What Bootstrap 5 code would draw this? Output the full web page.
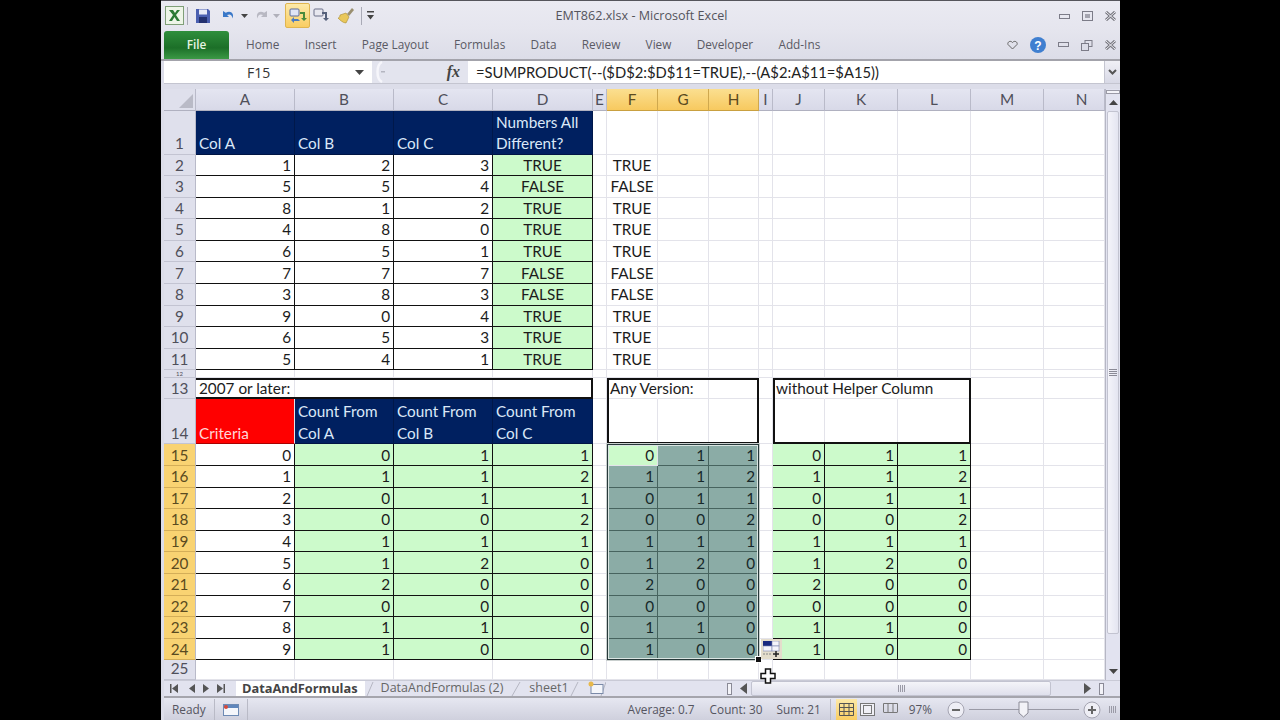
<!DOCTYPE html>
<html lang="en">
<head>
    <meta charset="UTF-8">
    <meta name="viewport" content="width=device-width, initial-scale=1.0">
    <title>EMT862.xlsx - Microsoft Excel</title>
    <link href="https://cdn.jsdelivr.net/npm/bootstrap@5.3.2/dist/css/bootstrap.min.css" rel="stylesheet">
    <style>
        html, body { height: 100%; background: #000; overflow: hidden; }
        .xl-window { width: 959px; height: 720px; margin-left: 161px; background: #dcdde9; border-top: 1px solid #55555c; font-family: "Open Sans", "Liberation Sans", sans-serif; font-size: 11.8px; color: #5a5a64; }

        .xl-titlebar { height: 29px; display: grid; grid-template-columns: 1fr auto 1fr; align-items: center; background: linear-gradient(#eaeaf2, #e5e5ee); padding-left: 3px; }
        .xl-qat svg { display: block; }
        .xl-qat-on { width: 25px; height: 25px; background: linear-gradient(#fde9a8, #f9cd62); border: 1px solid #e0b550; border-radius: 2px; }
        .xl-qsep { width: 1px; height: 18px; background: #a9aab6; }
        .q1 { margin-left: 1px; } .q3 { margin-left: 3px; } .q4 { margin-left: 4px; } .q5 { margin-left: 5px; }
        .q6 { margin-left: 6px; } .q7 { margin-left: 7px; } .q9 { margin-left: 9px; } .q10 { margin-left: 10px; }
        .q14 { margin-left: 14px; } .q15 { margin-left: 15px; }
        .xl-doctitle { font-size: 12.6px; color: #54545c; padding: 1px 1px 0 0; }
        .xl-winbtns { gap: 12px; padding-right: 4px; }

        .xl-tabs { height: 31px; background: linear-gradient(#e5e5ee, #dcdde8); padding: 1px 0 0 3px; border-bottom: 2px solid #a3a3ab; }
        .xl-file { width: 65px; height: 28px; background: linear-gradient(#2f8f3c, #1c6f28 60%, #3b9945); color: #e6f4e2; border-radius: 3px 3px 0 0; font-weight: 600; }
        .xl-tablist { gap: 25.300px; margin-left: 17px; }

        .xl-formula { height: 23px; background: #e3e4ee; margin-left: 3px; border-bottom: 1px solid #c4c5d0; }
        .xl-namebox { width: 208px; background: #fff; color: #333; font-size: 14px; }
        .xl-namebox span { margin-left: 83px; }
        .xl-fxzone { width: 96px; }
        .xl-fx { font-family: "Liberation Serif", serif; font-style: italic; font-weight: 700; font-size: 16px; color: #444; margin-right: 8px; }
        .xl-formula-text { background: #fff; font-family: Lato, "Liberation Sans", sans-serif; font-size: 14.750px; color: #222; padding-left: 8px; }
        .xl-formula-btn { width: 16px; background: linear-gradient(#f0f0f6, #d8d9e6); border-left: 1px solid #c4c5d0; }
        .xl-gap { height: 5px; }

        .xl-sheetwrap { margin-left: 3px; }
        .xl-sheet { width: 941px; height: 591px; display: grid; overflow: hidden; background: #fff;
            grid-template-columns: 32px 99px 99px 99px 100px 14px 51px 51px 50px 14px 52px 73px 73px 73px 61px;
            grid-template-rows: 22px 43.5px repeat(10, 21.6px) 7.5px 21.5px 45px repeat(10, 21.6px) 19.5px;
            font-family: Lato, "Liberation Sans", sans-serif; font-size: 15.300px; color: #1c1c1c; }
        .xl-cell { border-right: 1px solid #e3e3ea; border-bottom: 1px solid #e3e3ea; padding: 0 3px; white-space: nowrap; overflow: visible; display: flex; align-items: flex-end; line-height: 21.5px; min-width: 0; min-height: 0; }
        .xl-cell > span { margin-bottom: -1px; }
        .xl-num { justify-content: flex-end; padding-right: 3px; }
        .xl-mid { justify-content: center; }
        .xl-flowover { border-right-color: transparent; }
        .xl-hd { background: linear-gradient(#e4e5f1, #d8d9e8); border-right: 1px solid #b9bac9; border-bottom: 1px solid #b0b1c0; color: #4f4f5a; justify-content: center; align-items: center; overflow: hidden; }
        .xl-hd > span { margin-bottom: 0; }
        .xl-hd-clip { padding-left: 15px; padding-right: 0; }
        .xl-rh { background: #dfe0ec; border-right: 1px solid #b9bac9; border-bottom: 1px solid #c3c4d2; color: #4f4f5a; justify-content: center; padding: 0; overflow: hidden; }
        .xl-rh-thin { font-size: 6px; line-height: 7px; align-items: center; }
        .xl-rh-thin > span { margin-bottom: 0; }
        .xl-hd-on { background: linear-gradient(#fbdf90, #f7c95f); border-right-color: #cfa84e; border-bottom-color: #c9a040; color: #5a4a20; }
        .xl-rh-on { background: #f9d372; border-bottom-color: #d4ae58; color: #5a4a20; }
        .xl-corner { background: #dfe0ec; justify-content: flex-end; align-items: flex-end; padding: 0 2px 2px 0; }
        .xl-boxed { border-right-color: #111; border-bottom-color: #111; }
        .xl-navy { background: #002060; color: #dbe8f8; border-right-color: #00184a; border-bottom-color: #001544; white-space: normal; }
        .xl-red { background: #f00; color: #ffd8d8; border-bottom-color: #a00; }
        .xl-green { background: #ccfacb; }
        .xl-sel { background: #8bacA6; color: #17282a; border-right-color: #47645f; border-bottom-color: #47645f; }
        .xl-frame { border: 2px solid #111; pointer-events: none; }
        .xl-frame-open { border-left-width: 0; }
        .xl-selbox { border: 1px solid #27393a; box-shadow: inset 0 0 0 1px #dbe6e3, 0 0 0 1px #c9cfce; pointer-events: none; }

        .xl-bottom { height: 18px; margin-left: 3px; background: #e2e3ef; border-top: 1px solid #c9cad6; border-bottom: 2px solid #a5a5ad; }
        .xl-sheetnav { width: 72px; gap: 8px; padding-left: 6px; color: #555; }
        .xl-sheettab { height: 15px; font-size: 12.500px; color: #666; }
        .xl-sheettab-on { background: #fff; font-size: 12.800px; font-weight: 700; color: #444; padding: 0 7px 0 6px; }
        .xl-slant { display: block; }
        .xl-split { width: 5px; height: 12px; border: 1px solid #8a8a96; background: #f3f3f8; }
        .xl-hthumb { width: 300px; height: 15px; background: linear-gradient(#f4f4f9, #dfe0ec); border: 1px solid #c2c3d0; border-radius: 2px; }
        .xl-harrow { margin-left: 33px; }
        .xl-grip { width: 7px; height: 7px; background: repeating-linear-gradient(90deg, #9a9aa6 0 1px, transparent 1px 2px); }

        .xl-vscroll { width: 15px; height: 591px; background: #e2e3f0; border-left: 1px solid #b6b7c4; }
        .xl-vsplit { height: 4px; background: #f4f4f9; border: 1px solid #9a9aa6; margin-top: 1px; }
        .xl-varrow { height: 17px; }
        .xl-vthumb { height: 523px; background: linear-gradient(90deg, #f4f4fa, #e4e5f1); border: 1px solid #c2c3d0; border-radius: 2px; margin: 0 1px; }
        .xl-vgrip { width: 8px; height: 7px; background: repeating-linear-gradient(#8a8a96 0 1px, transparent 1px 2px); }

        .xl-status { height: 22px; margin-left: 3px; background: linear-gradient(#e6e7f1, #cfd0dd); color: #55555f; padding-top: 1px; }
        .xl-status-div { width: 1px; height: 21px; background: #b9bac6; }
        .xl-view { width: 21px; height: 21px; }
        .xl-view-on { background: linear-gradient(#fde9a8, #f9cd62); }
        .xl-viewgap { margin-left: 2px; }
        .xl-pct { margin: 0 15px 0 8px; }
        .xl-zoomtrack { width: 110px; height: 1px; background: #9a9aa6; position: relative; margin: 0 4px; }
        .xl-zoomthumb { position: absolute; left: 49px; top: -8px; }

        .xl-hover { position: absolute; z-index: 5; }
        .xl-handle { left: 755px; top: 656px; }
        .xl-fillopts { left: 761px; top: 639px; width: 21px; height: 20px; background: #e4ddcc; }
        .xl-cursor { left: 760px; top: 668px; }
    </style>
</head>
<body>
<div class="xl-window position-relative">
    <div class="xl-titlebar">
        <div class="xl-qat d-flex align-items-center">
            <svg class="q1" width="19" height="19" viewBox="0 0 19 19"><rect x=".5" y=".5" width="18" height="18" fill="#eef5e8" stroke="#7f9f78"/><path d="M4 4l4 5-4 6h3l2.500-4 2.500 4h3l-4-6 4-5h-3l-2 3-2-3z" fill="#2c7a35"/></svg>
            <span class="xl-qsep q3"></span>
            <svg class="q7" width="16" height="16" viewBox="0 0 16 16"><path d="M1 1h12l2 2v12H1z" fill="#4b5fb0"/><rect x="4" y="1.500" width="8" height="5" fill="#e8eaf6"/><rect x="4" y="9" width="8" height="6" fill="#23306e"/></svg>
            <svg class="q10" width="14" height="14" viewBox="0 0 14 14"><path d="M2 2v6h6L6 6c3-1.500 5 0 5.500 3.500C13.500 5 10 1 4.800 3.800z" fill="#3a78c8"/></svg>
            <svg class="q6" width="7" height="4" viewBox="0 0 7 4"><path d="M0 0h7L3.500 4z" fill="#444"/></svg>
            <svg class="q7" width="14" height="14" viewBox="0 0 14 14"><path d="M12 2v6H6l2-2C5 4.500 3 6 2.500 9.500.5 5 4 1 9.200 3.800z" fill="#b8b8c2"/></svg>
            <svg class="q4" width="7" height="4" viewBox="0 0 7 4"><path d="M0 0h7L3.500 4z" fill="#b0b0ba"/></svg>
            <span class="xl-qat-on q5 d-flex align-items-center justify-content-center">
                <svg width="18" height="18" viewBox="0 0 18 18"><rect x="1" y="2" width="9" height="7" rx="1" fill="#dfe4f4" stroke="#5b6b9a"/><path d="M9 12l-4 0 0-2-3 3 3 3 0-2 6 0z" fill="#4a7ac0"/><path d="M11 5h5v6l2 0-3 3-3-3 2 0V7h-3z" fill="#4a8a3c"/></svg>
            </span>
            <svg class="q3" width="18" height="17" viewBox="0 0 18 17"><rect x="1" y="2" width="9" height="7" rx="1" fill="#e8e8f0" stroke="#6b6f88"/><path d="M9 5h5v6l2 0-3 3-3-3 2 0V7H9z" fill="#55607a"/></svg>
            <svg class="q6" width="18" height="17" viewBox="0 0 18 17"><path d="M10 7l5-6 2 2-5 6z" fill="#9a8f70"/><path d="M3 8l6-2 3 4-3 6c-3 0-6-3-8-5 1 0 2-1 2-3z" fill="#e9c75a" stroke="#a88c30" stroke-width=".6"/></svg>
            <span class="xl-qsep q6"></span>
            <svg class="q5" width="7" height="9" viewBox="0 0 7 9"><path d="M0 0h7v1.500H0zM0 4h7L3.500 8.500z" fill="#444"/></svg>
        </div>
        <div class="xl-doctitle">EMT862.xlsx - Microsoft Excel</div>
        <div class="xl-winbtns d-flex justify-content-end align-items-center">
            <svg width="11" height="10" viewBox="0 0 11 10"><rect x=".5" y="3.500" width="10" height="4" fill="none" stroke="#7c7c88"/></svg>
            <svg width="11" height="10" viewBox="0 0 11 10"><rect x=".5" y=".5" width="10" height="9" fill="none" stroke="#7c7c88"/><rect x="3" y="3" width="5" height="4" fill="#a5a5b0"/></svg>
            <svg width="11" height="10" viewBox="0 0 11 10"><path d="M1 1l9 8M10 1L1 9" stroke="#77777f" stroke-width="3"/><path d="M1 1l9 8M10 1L1 9" stroke="#eeeef4"/></svg>
        </div>
    </div>

    <div class="xl-tabs d-flex align-items-center">
        <div class="xl-file d-flex align-items-center justify-content-center">File</div>
        <div class="xl-tablist d-flex flex-grow-1">
            <span>Home</span><span>Insert</span><span>Page Layout</span><span>Formulas</span><span>Data</span><span>Review</span><span>View</span><span>Developer</span><span>Add-Ins</span>
        </div>
        <div class="xl-winbtns d-flex align-items-center">
            <svg width="11" height="10" viewBox="0 0 11 10"><path d="M5.500 9L1 4.500C0 2 3.500 0 5.500 2.500 7.500 0 11 2 10 4.500z" fill="none" stroke="#666"/></svg>
            <svg width="16" height="16" viewBox="0 0 16 16"><circle cx="8" cy="8" r="8" fill="#3f7fd0"/><text x="8" y="12.500" text-anchor="middle" font-size="12" font-weight="700" fill="#fff" font-family="Liberation Sans">?</text></svg>
            <svg width="11" height="6" viewBox="0 0 11 6"><rect x=".5" y=".5" width="10" height="4" fill="none" stroke="#7c7c88"/></svg>
            <svg width="12" height="11" viewBox="0 0 12 11"><rect x="4" y=".5" width="7" height="6" fill="none" stroke="#7c7c88"/><rect x=".5" y="3.500" width="7" height="7" fill="#dcdde8" stroke="#7c7c88"/></svg>
            <svg width="11" height="10" viewBox="0 0 11 10"><path d="M1 1l9 8M10 1L1 9" stroke="#77777f" stroke-width="3"/><path d="M1 1l9 8M10 1L1 9" stroke="#eeeef4"/></svg>
        </div>
    </div>

    <div class="xl-formula d-flex">
        <div class="xl-namebox d-flex align-items-center"><span class="flex-grow-1">F15</span><svg width="9" height="5" viewBox="0 0 9 5" class="me-2"><path d="M0 0h9L4.500 5z" fill="#444"/></svg></div>
        <div class="xl-fxzone d-flex align-items-center">
            <svg class="q1" width="14" height="22" viewBox="0 0 14 22"><path d="M9 1C3 4 3 18 9 21" fill="none" stroke="#f6f6fb" stroke-width="2.500"/><rect x="8" y="10" width="4" height="1.500" fill="#b4b5c0"/></svg>
            <span class="xl-fx ms-auto">fx</span>
        </div>
        <div class="xl-formula-text flex-grow-1 d-flex align-items-center">=SUMPRODUCT(--($D$2:$D$11=TRUE),--(A$2:A$11=$A15))</div>
        <div class="xl-formula-btn d-flex align-items-center justify-content-center"><svg width="9" height="6" viewBox="0 0 9 6"><path d="M1 1l3.500 3.500L8 1" fill="none" stroke="#555" stroke-width="2"/></svg></div>
    </div>
    <div class="xl-gap"></div>

    <div class="xl-sheetwrap d-flex">
        <div class="xl-sheet" id="sheet"></div>
        <div class="xl-vscroll d-flex flex-column">
            <div class="xl-vsplit"></div>
            <div class="xl-varrow d-flex align-items-center justify-content-center"><svg width="9" height="5" viewBox="0 0 9 5"><path d="M4.500 0L9 5H0z" fill="#444"/></svg></div>
            <div class="xl-vthumb d-flex align-items-center justify-content-center"><div class="xl-vgrip"></div></div>
            <div class="xl-varrow mt-auto d-flex align-items-center justify-content-center"><svg width="9" height="5" viewBox="0 0 9 5"><path d="M0 0h9L4.500 5z" fill="#444"/></svg></div>
        </div>
    </div>

    <div class="xl-bottom d-flex align-items-center">
        <div class="xl-sheetnav d-flex align-items-center">
            <svg width="8" height="9" viewBox="0 0 8 9"><path d="M0 0h1.500v9H0zM8 0v9L2 4.500z" fill="#555"/></svg>
            <svg width="6" height="9" viewBox="0 0 6 9" class="q3"><path d="M6 0v9L0 4.500z" fill="#555"/></svg>
            <svg width="6" height="9" viewBox="0 0 6 9"><path d="M0 0v9l6-4.500z" fill="#555"/></svg>
            <svg width="8" height="9" viewBox="0 0 8 9"><path d="M8 0H6.500v9H8zM0 0v9l6-4.500z" fill="#555"/></svg>
        </div>
        <span class="xl-sheettab xl-sheettab-on d-flex align-items-center">DataAndFormulas</span>
        <svg class="xl-slant" width="16" height="15" viewBox="0 0 16 15"><path d="M2 15L8 1" stroke="#b5b6c2" fill="none"/></svg>
        <span class="xl-sheettab d-flex align-items-center">DataAndFormulas (2)</span>
        <svg class="xl-slant q5" width="21" height="15" viewBox="0 0 21 15"><path d="M4 15L12 1" stroke="#b5b6c2" fill="none"/></svg>
        <span class="xl-sheettab d-flex align-items-center">sheet1</span>
        <svg class="xl-slant" width="37" height="15" viewBox="0 0 37 15"><path d="M2 15L9 1" stroke="#b5b6c2" fill="none"/><path d="M32 15L37 1" stroke="#b5b6c2" fill="none"/><rect x="22" y="3.500" width="12" height="9" fill="#f4f6fb" stroke="#7a8aa8"/><circle cx="22" cy="3" r="2.500" fill="#e8b94a"/></svg>
        <div class="xl-split ms-auto me-2"></div>
        <svg width="7" height="11" viewBox="0 0 7 11" class="me-1"><path d="M7 0v11L0 5.500z" fill="#555"/></svg>
        <div class="xl-hthumb d-flex align-items-center justify-content-center"><div class="xl-grip"></div></div>
        <svg width="7" height="11" viewBox="0 0 7 11" class="xl-harrow"><path d="M0 0v11l7-5.500z" fill="#555"/></svg>
        <div class="xl-split ms-2 me-3"></div>
    </div>

    <div class="xl-status d-flex align-items-center">
        <span class="ms-2">Ready</span>
        <span class="xl-status-div ms-2"></span>
        <svg width="16" height="12" viewBox="0 0 16 12" class="ms-2"><rect x=".5" y=".5" width="15" height="11" fill="#f4f6fb" stroke="#6d8ab4"/><rect x="1" y="1" width="14" height="3" fill="#5f86bc"/><circle cx="3" cy="3" r="2" fill="#d84a3a"/></svg>
        <span class="xl-status-div ms-2"></span>
        <span class="ms-auto">Average: 0.7</span>
        <span class="q15">Count: 30</span>
        <span class="q14">Sum: 21</span>
        <span class="xl-status-div q9"></span>
        <span class="xl-view xl-view-on d-flex align-items-center justify-content-center q5"><svg width="15" height="13" viewBox="0 0 15 13"><path d="M.5.500h14v12H.500zM.5 4.500h14M.5 8.500h14M5 .5v12M10 .5v12" fill="none" stroke="#555"/></svg></span>
        <span class="xl-view d-flex align-items-center justify-content-center"><svg width="15" height="13" viewBox="0 0 15 13"><rect x=".5" y=".5" width="14" height="12" fill="#f0f0f6" stroke="#777"/><rect x="3.500" y="2.500" width="8" height="8" fill="none" stroke="#777"/></svg></span>
        <span class="xl-view d-flex align-items-center justify-content-center xl-viewgap"><svg width="15" height="13" viewBox="0 0 15 13"><path d="M.5 9V.500h14V9M5 .5V9M10 .5V9M.5 9.500h14" fill="none" stroke="#777"/></svg></span>
        <span class="xl-pct">97%</span>
        <svg width="18" height="18" viewBox="0 0 18 18"><circle cx="9" cy="9" r="8" fill="#eeeef5" stroke="#a5a5b2"/><rect x="5" y="8" width="8" height="2" fill="#666"/></svg>
        <div class="xl-zoomtrack flex-shrink-0"><svg class="xl-zoomthumb" width="11" height="17" viewBox="0 0 11 17"><path d="M1 1h9v11l-4.500 4L1 12z" fill="#f2f2f7" stroke="#8a8a96"/></svg></div>
        <svg width="18" height="18" viewBox="0 0 18 18"><circle cx="9" cy="9" r="8" fill="#eeeef5" stroke="#a5a5b2"/><path d="M5 8h3V5h2v3h3v2h-3v3H8v-3H5z" fill="#666"/></svg>
        <div class="xl-grip ms-2 me-1"></div>
    </div>
</div>

<script>
    const letters = 'ABCDEFGHIJKLMN'.split('');
    const top10 = [[1,2,3,1],[5,5,4,0],[8,1,2,1],[4,8,0,1],[6,5,1,1],[7,7,7,0],[3,8,3,0],[9,0,4,1],[6,5,3,1],[5,4,1,1]];
    const counts = [[0,1,1],[1,1,2],[0,1,1],[0,0,2],[1,1,1],[1,2,0],[2,0,0],[0,0,0],[1,1,0],[1,0,0]];
    const sheet = document.getElementById('sheet');

    function put(row, col, cls, text, rowSpan, colSpan) {
        const d = document.createElement('div');
        d.className = 'xl-cell ' + cls;
        d.style.gridRow = row + (rowSpan ? ' / span ' + rowSpan : '');
        d.style.gridColumn = col + (colSpan ? ' / span ' + colSpan : '');
        if (text !== undefined) {
            const s = document.createElement('span');
            s.textContent = text;
            d.appendChild(s);
        }
        sheet.appendChild(d);
        return d;
    }
    // excel row number -> grid row line
    const g = n => n + 1;

    // headers
    const corner = put(1, 1, 'xl-hd xl-corner');
    corner.innerHTML = '<svg width="14" height="14" viewBox="0 0 14 14"><path d="M14 0v14H0z" fill="#b9bac6"/></svg>';
    letters.forEach((l, i) => put(1, i + 2, 'xl-hd' + ('FGH'.includes(l) ? ' xl-hd-on' : '') + (l === 'N' ? ' xl-hd-clip' : ''), l));
    for (let r = 1; r <= 25; r++) {
        put(g(r), 1, 'xl-rh' + (r >= 15 && r <= 24 ? ' xl-rh-on' : '') + (r === 12 ? ' xl-rh-thin' : ''), r);
    }
    const filled = {};
    const mark = (r, c) => filled[r + ':' + c] = 1;

    // top block
    ['Col A', 'Col B', 'Col C', 'Numbers All Different?'].forEach((t, i) => { put(g(1), i + 2, 'xl-navy', t); mark(1, i + 2); });
    top10.forEach((row, i) => {
        const r = i + 2;
        row.slice(0, 3).forEach((v, c) => { put(g(r), c + 2, 'xl-num xl-boxed', v); mark(r, c + 2); });
        put(g(r), 5, 'xl-mid xl-boxed xl-green', row[3] ? 'TRUE' : 'FALSE'); mark(r, 5);
        put(g(r), 7, 'xl-mid', row[3] ? 'TRUE' : 'FALSE'); mark(r, 7);
    });

    // row 13 and 14
    put(g(13), 2, '', '2007 or later:'); mark(13, 2);
    put(g(14), 2, 'xl-red', 'Criteria'); mark(14, 2);
    ['Count From Col A', 'Count From Col B', 'Count From Col C'].forEach((t, i) => { put(g(14), i + 3, 'xl-navy', t); mark(14, i + 3); });
    put(g(13), 7, 'xl-flowover', 'Any Version:'); mark(13, 7);
    put(g(13), 11, 'xl-flowover', 'without Helper Column'); mark(13, 11);
    put(g(13), 12, 'xl-flowover'); mark(13, 12);

    // lower block
    counts.forEach((row, i) => {
        const r = i + 15;
        put(g(r), 2, 'xl-num xl-boxed', i); mark(r, 2);
        row.forEach((v, c) => {
            put(g(r), c + 3, 'xl-num xl-boxed xl-green', v); mark(r, c + 3);
            put(g(r), c + 7, 'xl-num ' + (i === 0 && c === 0 ? 'xl-green' : 'xl-sel'), v); mark(r, c + 7);
            put(g(r), c + 11, 'xl-num xl-boxed xl-green', v); mark(r, c + 11);
        });
    });

    // empty cells keep the gridlines
    for (let r = 1; r <= 25; r++) {
        for (let c = 2; c <= 15; c++) {
            if (!filled[r + ':' + c]) put(g(r), c, '');
        }
    }

    // frames over the cells
    put(g(13), 2, 'xl-frame xl-frame-open', undefined, 1, 4);
    put(g(13), 7, 'xl-frame', undefined, 2, 3);
    put(g(13), 11, 'xl-frame', undefined, 2, 3);
    put(g(15), 7, 'xl-selbox', undefined, 10, 3);
</script>

<svg class="xl-hover xl-handle" width="7" height="7" viewBox="0 0 7 7"><rect x=".5" y=".5" width="6" height="6" fill="#111" stroke="#fff"/></svg>
<div class="xl-hover xl-fillopts d-flex align-items-center justify-content-center"><svg width="18" height="16" viewBox="0 0 18 16"><rect x="0" y="0" width="9" height="5" fill="#1a2a80"/><rect x="9" y="0" width="7" height="5" fill="#f4f4fa" stroke="#7a84b0" stroke-width=".6"/><rect x="0" y="5" width="9" height="5" fill="#f4f4fa" stroke="#7a84b0" stroke-width=".6"/><rect x="9" y="5" width="7" height="5" fill="#f4f4fa" stroke="#7a84b0" stroke-width=".6"/><path d="M0 13h8" stroke="#888" stroke-dasharray="2 1"/><path d="M13 10v6M10 13h6" stroke="#222" stroke-width="1.500"/></svg></div>
<svg class="xl-hover xl-cursor" width="16" height="16" viewBox="0 0 16 16"><path d="M5.500 1h5v4.500H15v5h-4.500V15h-5v-4.500H1v-5h4.500z" fill="#fff" stroke="#111" stroke-width="1.500"/></svg>
<script src="https://cdn.jsdelivr.net/npm/bootstrap@5.3.2/dist/js/bootstrap.bundle.min.js"></script>
</body>
</html>
